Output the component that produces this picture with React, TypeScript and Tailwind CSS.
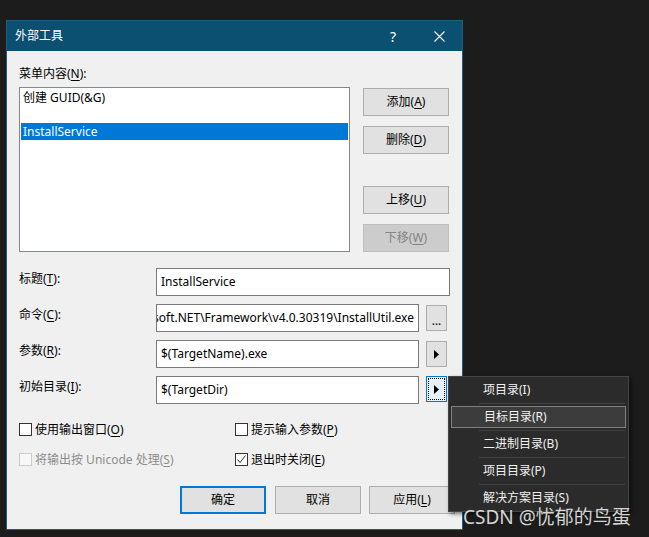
import React from "react";

const FONT = { fontFamily: '"Segoe UI", "Noto Sans", "Noto Sans CJK SC", sans-serif' };

function U({ c }: { c: string }) {
  return <span className="underline decoration-1 underline-offset-[2px]">{c}</span>;
}

function Btn({
  children,
  disabled,
  focused,
  className = "",
}: {
  children: React.ReactNode;
  disabled?: boolean;
  focused?: boolean;
  className?: string;
}) {
  const base = "flex items-center justify-center h-[28px] w-[86px] text-[12px] leading-[16px]";
  const look = disabled
    ? "bg-[#cccccc] border border-[#bfbfbf] text-[#838383]"
    : focused
    ? "bg-[#e1e1e1] border-2 border-[#0078d7] text-black"
    : "bg-[#e1e1e1] border border-[#adadad] text-black";
  return <div className={`${base} ${look} ${className}`}>{children}</div>;
}

function Arrow() {
  return (
    <svg width="5" height="9" viewBox="0 0 5 9">
      <path d="M0 0 L5 4.5 L0 9 Z" fill="#000" />
    </svg>
  );
}

function Check({ checked, disabled }: { checked?: boolean; disabled?: boolean }) {
  return (
    <div
      className={`w-[13px] h-[13px] border flex items-center justify-center ${
        disabled ? "border-[#cccccc] bg-[#f7f7f7]" : "border-[#333333] bg-white"
      }`}
    >
      {checked && (
        <svg width="11" height="11" viewBox="0 0 11 11">
          <path d="M1.5 5.5 L4 8.5 L9.5 1.5" fill="none" stroke="#333" strokeWidth="1" />
        </svg>
      )}
    </div>
  );
}

export default function App() {
  const menuItems = ["项目录(I)", "目标目录(R)", "二进制目录(B)", "项目目录(P)", "解决方案目录(S)"];
  return (
    <div className="relative w-[649px] h-[537px] bg-[#1c1c1c] overflow-hidden pt-[20px] pl-[6px]" style={FONT}>
      {/* Dialog */}
      <div className="w-[457px] h-[510px] border border-[#1f5d7c] flex flex-col">
        {/* Title bar */}
        <div className="h-[30px] bg-[#0b4f71] flex items-center text-white shrink-0">
          <div className="pl-[8px] text-[12px] leading-[16px]">外部工具</div>
          <div className="ml-auto w-[46px] h-full flex items-center justify-center text-[14px]">?</div>
          <div className="w-[46px] h-full flex items-center justify-center">
            <svg width="11" height="11" viewBox="0 0 11 11">
              <path d="M0.5 0.5 L10.5 10.5 M10.5 0.5 L0.5 10.5" stroke="#fff" strokeWidth="1.1" />
            </svg>
          </div>
        </div>
        {/* Body */}
        <div className="flex-1 bg-[#f0f0f0] pl-[12px] text-[12px] leading-[16px] text-black">
          <div className="mt-[15px] h-[16px]">
            菜单内容(<U c="N" />):
          </div>
          <div className="mt-[5px] flex">
            <div className="w-[331px] h-[165px] border border-[#828790] bg-white p-[1px]">
              <div className="h-[17px] pl-[2px] flex items-center">创建 GUID(&amp;G)</div>
              <div className="h-[17px]" />
              <div className="h-[17px] pl-[2px] flex items-center bg-[#0078d7] text-white">InstallService</div>
            </div>
            <div className="ml-[13px] pt-[1px] flex flex-col">
              <Btn>
                添加(<U c="A" />)
              </Btn>
              <Btn className="mt-[10px]">
                删除(<U c="D" />)
              </Btn>
              <Btn className="mt-[32px]">
                上移(<U c="U" />)
              </Btn>
              <Btn className="mt-[10px]" disabled>
                下移(<U c="W" />)
              </Btn>
            </div>
          </div>

          {/* Form rows */}
          <div className="mt-[16px] flex flex-col gap-[8px]">
            <div className="flex h-[28px]">
              <div className="w-[137px] pt-[3px]">
                标题(<U c="T" />):
              </div>
              <div className="w-[294px] h-[28px] border border-[#7a7a7a] bg-white flex items-center pl-[4px]">
                InstallService
              </div>
            </div>
            <div className="flex h-[28px]">
              <div className="w-[137px] pt-[3px]">
                命令(<U c="C" />):
              </div>
              <div className="w-[263px] h-[28px] border border-[#7a7a7a] bg-white flex items-center justify-end pr-[4px] overflow-hidden whitespace-nowrap">
                <span className="shrink-0">C:\Windows\Microsoft.NET\Framework\v4.0.30319\InstallUtil.exe</span>
              </div>
              <div className="ml-[7px] mt-[1px] w-[21px] h-[26px] bg-[#e1e1e1] border border-[#adadad] flex items-end justify-center pb-[5px] text-[12px] leading-[8px]">
                ...
              </div>
            </div>
            <div className="flex h-[28px]">
              <div className="w-[137px] pt-[3px]">
                参数(<U c="R" />):
              </div>
              <div className="w-[263px] h-[28px] border border-[#7a7a7a] bg-white flex items-center pl-[4px]">
                $(TargetName).exe
              </div>
              <div className="ml-[7px] mt-[1px] w-[21px] h-[26px] bg-[#e1e1e1] border border-[#adadad] flex items-center justify-center">
                <Arrow />
              </div>
            </div>
            <div className="flex h-[28px]">
              <div className="w-[137px] pt-[3px]">
                初始目录(<U c="I" />):
              </div>
              <div className="w-[263px] h-[28px] border border-[#7a7a7a] bg-white flex items-center pl-[4px]">
                $(TargetDir)
              </div>
              <div className="ml-[7px] w-[21px] h-[26px] bg-[#e5f1fb] border border-[#0078d7] p-[1px]">
                <div className="w-full h-full border border-dotted border-black flex items-center justify-center">
                  <Arrow />
                </div>
              </div>
            </div>
          </div>

          {/* Checkboxes */}
          <div className="mt-[19px] flex items-center h-[13px]">
            <div className="w-[216px] flex items-center gap-[3px]">
              <Check />
              <span>
                使用输出窗口(<U c="O" />)
              </span>
            </div>
            <div className="flex items-center gap-[3px]">
              <Check />
              <span>
                提示输入参数(<U c="P" />)
              </span>
            </div>
          </div>
          <div className="mt-[17px] flex items-center h-[13px]">
            <div className="w-[216px] flex items-center gap-[3px] text-[#8d8d8d]">
              <Check disabled />
              <span>
                将输出按 Unicode 处理(<U c="S" />)
              </span>
            </div>
            <div className="flex items-center gap-[3px]">
              <Check checked />
              <span>
                退出时关闭(<U c="E" />)
              </span>
            </div>
          </div>

          {/* Bottom buttons */}
          <div className="mt-[20px] ml-[161px] flex">
            <Btn focused>确定</Btn>
            <Btn className="ml-[9px]">取消</Btn>
            <Btn className="ml-[8px]">
              应用(<U c="L" />)
            </Btn>
          </div>
        </div>
      </div>

      {/* Context menu */}
      <div className="absolute left-[448px] top-[376px] w-[181px] h-[136px] bg-[#2b2b2b] border border-[#454545] shadow-[2px_2px_4px_rgba(0,0,0,0.5)] text-[12px] leading-[16px] text-[#f0f0f0]">
        {menuItems.map((t, i) => (
          <React.Fragment key={t}>
            {i > 0 && <div className="h-[1px] ml-[30px] mr-[3px] bg-[#404040]" />}
            <div className="h-[26px] px-[2px] py-[2px]">
              <div
                className={`h-full flex items-center pl-[32px] ${
                  i === 1 ? "bg-[#3c3c3c] border border-[#808080] pl-[31px]" : ""
                }`}
              >
                {t}
              </div>
            </div>
          </React.Fragment>
        ))}
      </div>

      {/* Watermark */}
      <div className="absolute left-[463px] top-[505px] text-[19px] leading-[24px] text-[#d4d4d4] whitespace-nowrap">
        CSDN @忧郁的鸟蛋
      </div>
    </div>
  );
}
